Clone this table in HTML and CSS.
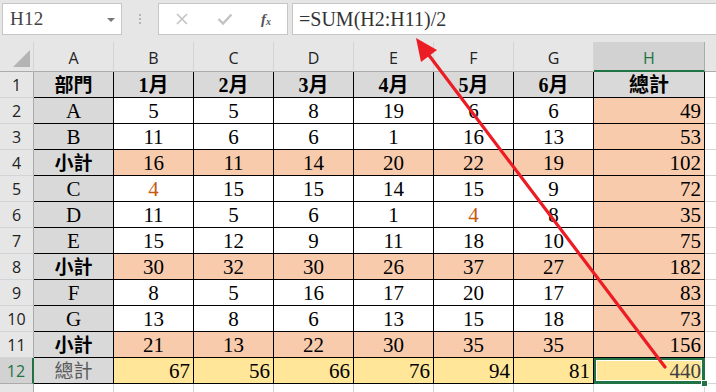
FILE: index.html
```html
<!DOCTYPE html>
<html lang="zh-Hant">
<head>
<meta charset="utf-8">
<title>Excel</title>
<link rel="stylesheet" href="styles.css">
</head>
<body>
<div class="app">
  <div class="fbar">
    <div class="namebox"><span class="nb-text">H12</span><span class="nb-drop"></span></div>
    <div class="dots"><i></i><i></i><i></i></div>
    <div class="fxbox">
      <svg class="ico" width="14" height="14" viewBox="0 0 14 14"><path d="M2 2 L12 12 M12 2 L2 12" stroke="#c3c3c3" stroke-width="1.6" fill="none"/></svg>
      <svg class="ico" width="16" height="14" viewBox="0 0 16 14"><path d="M1.5 7 L6 11.5 L14.5 2.5" stroke="#c3c3c3" stroke-width="2.4" fill="none"/></svg>
      <span class="fx">f<sub>x</sub></span>
    </div>
    <div class="formula">=SUM(H2:H11)/2</div>
  </div>
  <div class="sheet">
    <div class="corner"><span class="tri"></span></div>
    <div class="ch">A</div><div class="ch">B</div><div class="ch">C</div><div class="ch">D</div><div class="ch">E</div><div class="ch">F</div><div class="ch">G</div><div class="ch chs">H</div><div class="ch chf"></div>

    <div class="rh">1</div>
    <div class="c a b zh">部門</div><div class="c hd b">1月</div><div class="c hd b">2月</div><div class="c hd b">3月</div><div class="c hd b">4月</div><div class="c hd b">5月</div><div class="c hd b">6月</div><div class="c hd b zh">總計</div><div class="fc"></div>

    <div class="rh">2</div>
    <div class="c a">A</div><div class="c">5</div><div class="c">5</div><div class="c">8</div><div class="c">19</div><div class="c">6</div><div class="c">6</div><div class="c tot">49</div><div class="fc"></div>

    <div class="rh">3</div>
    <div class="c a">B</div><div class="c">11</div><div class="c">6</div><div class="c">6</div><div class="c">1</div><div class="c">16</div><div class="c">13</div><div class="c tot">53</div><div class="fc"></div>

    <div class="rh">4</div>
    <div class="c a b zh">小計</div><div class="c sub">16</div><div class="c sub">11</div><div class="c sub">14</div><div class="c sub">20</div><div class="c sub">22</div><div class="c sub">19</div><div class="c tot">102</div><div class="fc"></div>

    <div class="rh">5</div>
    <div class="c a">C</div><div class="c org">4</div><div class="c">15</div><div class="c">15</div><div class="c">14</div><div class="c">15</div><div class="c">9</div><div class="c tot">72</div><div class="fc"></div>

    <div class="rh">6</div>
    <div class="c a">D</div><div class="c">11</div><div class="c">5</div><div class="c">6</div><div class="c">1</div><div class="c org">4</div><div class="c">8</div><div class="c tot">35</div><div class="fc"></div>

    <div class="rh">7</div>
    <div class="c a">E</div><div class="c">15</div><div class="c">12</div><div class="c">9</div><div class="c">11</div><div class="c">18</div><div class="c">10</div><div class="c tot">75</div><div class="fc"></div>

    <div class="rh">8</div>
    <div class="c a b zh">小計</div><div class="c sub">30</div><div class="c sub">32</div><div class="c sub">30</div><div class="c sub">26</div><div class="c sub">37</div><div class="c sub">27</div><div class="c tot">182</div><div class="fc"></div>

    <div class="rh">9</div>
    <div class="c a">F</div><div class="c">8</div><div class="c">5</div><div class="c">16</div><div class="c">17</div><div class="c">20</div><div class="c">17</div><div class="c tot">83</div><div class="fc"></div>

    <div class="rh">10</div>
    <div class="c a">G</div><div class="c">13</div><div class="c">8</div><div class="c">6</div><div class="c">13</div><div class="c">15</div><div class="c">18</div><div class="c tot">73</div><div class="fc"></div>

    <div class="rh">11</div>
    <div class="c a b zh">小計</div><div class="c sub">21</div><div class="c sub">13</div><div class="c sub">22</div><div class="c sub">30</div><div class="c sub">35</div><div class="c sub">35</div><div class="c tot">156</div><div class="fc"></div>

    <div class="rh rhs">12</div>
    <div class="c a zh dim">總計</div><div class="c yel">67</div><div class="c yel">56</div><div class="c yel">66</div><div class="c yel">76</div><div class="c yel">94</div><div class="c yel">81</div><div class="c yel sel"><span class="selval">440</span><span class="handle"></span></div><div class="fc"></div>

    <div class="rh rhf"></div>
    <div class="fr"></div><div class="fr"></div><div class="fr"></div><div class="fr"></div><div class="fr"></div><div class="fr"></div><div class="fr"></div><div class="fr"></div><div class="fr frl"></div>
  </div>
  <svg class="arrow" width="716" height="392" viewBox="0 0 716 392">
    <line x1="665" y1="367" x2="428" y2="54" stroke="#ec1c24" stroke-width="3.2" stroke-linecap="round"/>
    <polygon points="416,38 437,50 421,62" fill="#ec1c24"/>
  </svg>
</div>
</body>
</html>
```

FILE: styles.css
```css
* { box-sizing: border-box; }
html, body { margin: 0; padding: 0; }
body {
  width: 716px;
  height: 392px;
  overflow: hidden;
  background: #e6e6e6;
  font-family: "Liberation Serif", "Noto Sans CJK TC", serif;
}
.app {
  position: relative;
  width: 716px;
  height: 392px;
  overflow: hidden;
}
.fbar {
  height: 42px;
  display: flex;
  align-items: flex-start;
  padding: 3px 0 0 2px;
}
.namebox {
  width: 120px;
  height: 32px;
  background: #fff;
  border: 1px solid #c6c6c6;
  display: flex;
  align-items: center;
  justify-content: space-between;
  padding: 0 6px 0 7px;
}
.nb-text {
  font-family: "Liberation Serif", serif;
  font-size: 19px;
  color: #444;
  letter-spacing: 0.3px;
}
.nb-drop {
  width: 0;
  height: 0;
  border-left: 4px solid transparent;
  border-right: 4px solid transparent;
  border-top: 4px solid #777;
  margin-top: 1px;
}
.dots {
  width: 36px;
  height: 32px;
  display: flex;
  flex-direction: column;
  align-items: center;
  justify-content: center;
  gap: 2px;
}
.dots i {
  display: block;
  width: 2px;
  height: 2px;
  background: #b5b5b5;
}
.fxbox {
  width: 130px;
  height: 32px;
  background: #fff;
  border: 1px solid #c6c6c6;
  display: flex;
  align-items: center;
  padding: 0 0 0 16px;
  gap: 0;
}
.fxbox .ico:first-child { margin-right: 28px; }
.fxbox .ico:nth-child(2) { margin-right: 28px; }
.fx {
  font-family: "Liberation Serif", serif;
  font-style: italic;
  font-size: 15px;
  color: #555;
  font-weight: bold;
}
.fx sub { font-size: 10px; vertical-align: -1px; }
.formula {
  margin-left: 4px;
  flex: 1;
  height: 32px;
  background: #fff;
  border: 1px solid #c6c6c6;
  border-right: none;
  font-family: "Liberation Serif", serif;
  font-size: 20px;
  color: #333;
  line-height: 30px;
  padding-left: 6px;
}
.sheet {
  display: grid;
  grid-template-columns: 34px repeat(7, 80px) 111px 1fr;
  grid-template-rows: 30px repeat(12, 26px) 1fr;
  height: 350px;
  background: #fff;
}
.corner {
  background: #e6e6e6;
  border-right: 1px solid #d4d4d4;
  border-bottom: 1px solid #ababab;
  position: relative;
}
.tri {
  position: absolute;
  right: 3px;
  bottom: 4px;
  width: 0;
  height: 0;
  border-left: 17px solid transparent;
  border-bottom: 17px solid #b4b4b4;
}
.ch {
  background: #e6e6e6;
  border-right: 1px solid #d4d4d4;
  border-bottom: 1px solid #ababab;
  font-family: "Open Sans", "Noto Sans", sans-serif;
  font-size: 16px;
  color: #222;
  display: flex;
  align-items: center;
  justify-content: center;
  padding-top: 3px;
}
.chs {
  background: #d2d2d2;
  color: #217346;
  border-right: 1px solid #ababab;
  border-bottom: 2px solid #217346;
  padding-top: 4px;
}
.chf { border-right: none; }
.rh {
  background: #e6e6e6;
  border-right: 1px solid #ababab;
  border-bottom: 1px solid #d4d4d4;
  font-family: "Open Sans", "Noto Sans", sans-serif;
  font-size: 16px;
  color: #222;
  display: flex;
  align-items: center;
  justify-content: center;
}
.rhs {
  background: #d2d2d2;
  color: #217346;
  border-right: 2px solid #217346;
  border-bottom: 1px solid #ababab;
}
.rhf { border-bottom: none; }
.c {
  border-right: 1px solid #000;
  border-bottom: 1px solid #000;
  font-size: 21px;
  color: #000;
  display: flex;
  align-items: center;
  justify-content: center;
  line-height: 1;
  padding-top: 1px;
  white-space: nowrap;
}
.a { background: #d9d9d9; }
.hd { background: #d9d9d9; }
.b { font-weight: bold; }
.zh { font-size: 19px; letter-spacing: 0; }
.hd.b { font-size: 20px; }
.sub { background: #f8cbad; }
.tot {
  background: #f8cbad;
  justify-content: flex-end;
  padding-right: 3px;
}
.yel {
  background: #ffe699;
  justify-content: flex-end;
  padding-right: 3px;
}
.dim { color: #5a5a5a; }
.org { color: #c55a11; }
.sel {
  position: relative;
  box-shadow: inset 0 0 0 2px #217346, inset 0 0 0 3px #fff;
  border-right: 1px solid #217346;
  border-bottom: 1px solid #217346;
  color: #404040;
}
.handle {
  position: absolute;
  right: -4px;
  bottom: -4px;
  width: 7px;
  height: 7px;
  background: #217346;
  border: 1px solid #fff;
}
.fc {
  border-bottom: 1px solid #d4d4d4;
}
.fr {
  border-right: 1px solid #d4d4d4;
}
.frl { border-right: none; }
.arrow {
  position: absolute;
  left: 0;
  top: 0;
  pointer-events: none;
}
```
